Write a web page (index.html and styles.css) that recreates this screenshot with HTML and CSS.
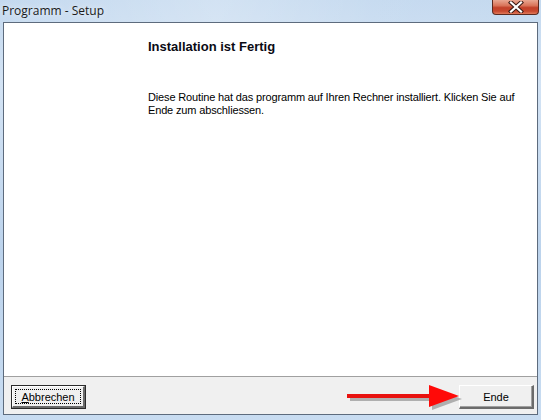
FILE: index.html
```html
<!DOCTYPE html>
<html>
<head>
<meta charset="utf-8">
<link rel="stylesheet" href="styles.css">
</head>
<body>
<div class="window">
  <div class="titlebar">
    <span class="title">Programm - Setup</span>
    <div class="close">
      <svg width="20" height="12" viewBox="0 0 20 12">
        <path d="M5 1.5 L15 10.5 M15 1.5 L5 10.5" stroke="#3a1a14" stroke-width="4.2" stroke-linecap="square"/>
        <path d="M5 1.5 L15 10.5 M15 1.5 L5 10.5" stroke="#ffffff" stroke-width="2.2" stroke-linecap="square"/>
      </svg>
    </div>
  </div>
  <div class="client">
    <div class="content">
      <h1 class="heading">Installation ist Fertig</h1>
      <p class="text">Diese Routine hat das programm auf Ihren Rechner installiert. Klicken Sie auf Ende zum abschliessen.</p>
    </div>
    <div class="buttonbar">
      <div class="btn-default"><div class="btn btn-inner"><span class="focus"><u>A</u>bbrechen</span></div></div>
      <div class="btn btn-end">Ende</div>
      <svg class="arrow" width="130" height="30" viewBox="0 0 130 30">
        <g transform="translate(3,3)" fill="#7a7a7a" opacity="0.55">
          <rect x="2" y="11" width="85" height="4"/>
          <polygon points="84,2 114,13 84,24"/>
        </g>
        <rect x="2" y="11" width="85" height="4" fill="#e8120f"/>
        <polygon points="84,2 114,13 84,24" fill="#ff0a08"/>
      </svg>
    </div>
  </div>
</div>
</body>
</html>
```
FILE: styles.css
```css
html, body {
  margin: 0;
  padding: 0;
}
body {
  width: 541px;
  height: 420px;
  overflow: hidden;
}
.window {
  width: 541px;
  height: 420px;
  box-sizing: border-box;
  display: flex;
  flex-direction: column;
  padding: 0 3px 5px 3px;
  background: linear-gradient(180deg, #c4d9ef 0%, #d3e3f4 20%, #bcd3ec 60%, #c8dcf1 100%);
}
.titlebar {
  height: 22px;
  display: flex;
  align-items: flex-start;
  justify-content: space-between;
  flex-shrink: 0;
  background: linear-gradient(90deg, rgba(255,255,255,0) 0%, rgba(255,255,255,0.25) 40%, rgba(255,255,255,0.05) 70%, rgba(255,255,255,0) 100%);
  margin: 0 -3px;
  padding: 0 2px 0 2px;
}
.title {
  font-family: "Open Sans", "Noto Sans", sans-serif;
  font-size: 12px;
  color: #1a1a1a;
  line-height: 14px;
  padding-top: 4px;
  text-shadow: 0 0 6px rgba(255,255,255,0.9);
}
.close {
  width: 47px;
  height: 15px;
  margin-right: 0;
  box-sizing: border-box;
  border: 1px solid #5b2a20;
  border-top: none;
  border-radius: 0 0 4px 4px;
  background: linear-gradient(180deg, #e9a792 0%, #d9745a 40%, #c2412a 55%, #c8492f 80%, #e07a5a 100%);
  display: flex;
  align-items: center;
  justify-content: center;
}
.client {
  flex: 1;
  display: flex;
  flex-direction: column;
  border: 1px solid #5d6b7d;
  background: #ffffff;
}
.content {
  flex: 1;
  padding: 16px 0 0 144px;
  font-family: "Liberation Sans", Arial, sans-serif;
}
.heading {
  margin: 0;
  font-size: 13px;
  font-weight: bold;
  color: #0a0a14;
  line-height: 16px;
}
.text {
  margin: 36px 0 0 0;
  font-size: 11px;
  line-height: 13px;
  letter-spacing: -0.15px;
  color: #000;
  width: 380px;
}
.buttonbar {
  position: relative;
  height: 38px;
  flex-shrink: 0;
  background: #f0f0f0;
  border-top: 1px solid #a0a0a0;
  display: flex;
  align-items: flex-start;
  justify-content: space-between;
  padding: 8px 3px 0 7px;
  box-sizing: border-box;
  font-family: "Liberation Sans", Arial, sans-serif;
  font-size: 11px;
}
.btn {
  box-sizing: border-box;
  background: #f0f0f0;
  border-style: solid;
  border-width: 1px 2px 2px 1px;
  border-color: #ffffff #6b6b6b #6b6b6b #ffffff;
  display: flex;
  align-items: center;
  justify-content: center;
  color: #000;
}
.btn-default {
  width: 75px;
  height: 24px;
  box-sizing: border-box;
  border: 1px solid #2a2a2a;
  display: flex;
}
.btn-inner {
  flex: 1;
  padding: 2px;
}
.focus {
  flex: 1;
  align-self: stretch;
  border: 1px dotted #000;
  display: flex;
  align-items: center;
  justify-content: center;
}
.btn-end {
  width: 75px;
  height: 24px;
  box-shadow: inset -1px -1px 0 #a0a0a0;
}
.arrow {
  position: absolute;
  left: 341px;
  top: 6px;
}
```
